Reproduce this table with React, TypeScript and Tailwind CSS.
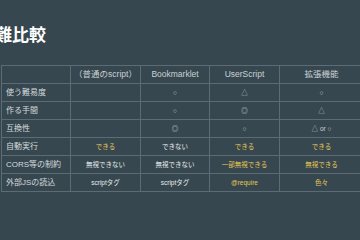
const rows: { label: string; cells: { text: string; yellow?: boolean; sym?: boolean }[] }[] = [
  { label: '使う難易度', cells: [{ text: '' }, { text: '○', sym: true }, { text: '△', sym: true }, { text: '○', sym: true }] },
  { label: '作る手間', cells: [{ text: '' }, { text: '○', sym: true }, { text: '◎', sym: true }, { text: '△', sym: true }] },
  { label: '互換性', cells: [{ text: '' }, { text: '◎', sym: true }, { text: '○', sym: true }, { text: '△ or ○', sym: true }] },
  {
    label: '自動実行',
    cells: [{ text: 'できる', yellow: true }, { text: 'できない' }, { text: 'できる', yellow: true }, { text: 'できる', yellow: true }],
  },
  {
    label: 'CORS等の制約',
    cells: [{ text: '無視できない' }, { text: '無視できない' }, { text: '一部無視できる', yellow: true }, { text: '無視できる', yellow: true }],
  },
  {
    label: '外部JSの読込',
    cells: [{ text: 'scriptタグ' }, { text: 'scriptタグ' }, { text: '@require', yellow: true }, { text: '色々', yellow: true }],
  },
];

const headers = ['', '（普通のscript）', 'Bookmarklet', 'UserScript', '拡張機能'];

export default function App() {
  return (
    <div className="w-[360px] h-[240px] overflow-hidden bg-[#37474f] font-['Liberation_Sans','Noto_Sans_CJK_JP',sans-serif] text-[#d5dbde]">
      {/* Title (cut off at the slide's left edge) */}
      <div className="pt-[25px] h-[65px]">
        <h1 className="ml-[-5px] text-[17px] leading-[22px] font-bold text-white whitespace-nowrap">難比較</h1>
      </div>

      {/* Comparison table */}
      <table className="ml-px w-[362px] table-fixed border-collapse">
        <colgroup>
          <col className="w-[69px]" />
          <col className="w-[70px]" />
          <col className="w-[69px]" />
          <col className="w-[70px]" />
          <col className="w-[84px]" />
        </colgroup>
        <thead>
          <tr className="h-[18px]">
            {headers.map((h, i) => (
              <th key={i} className="border border-[#5d6c74] p-0 text-[8.5px] font-normal text-[#c9d1d5] text-center whitespace-nowrap">
                {h}
              </th>
            ))}
          </tr>
        </thead>
        <tbody>
          {rows.map((row) => (
            <tr key={row.label} className="h-[18px]">
              <td className="border border-[#5d6c74] p-0 pl-[4px] text-[8px] text-[#d5dbde] whitespace-nowrap">{row.label}</td>
              {row.cells.map((c, i) => (
                <td
                  key={i}
                  className={
                    'border border-[#5d6c74] p-0 text-center whitespace-nowrap ' +
                    (c.sym ? 'text-[6.5px] text-[#c9d1d5] ' : 'text-[6.5px] ') +
                    (c.yellow ? 'text-[#e6c75a]' : c.sym ? '' : 'text-[#e8ecee]')
                  }
                >
                  {c.text}
                </td>
              ))}
            </tr>
          ))}
        </tbody>
      </table>
    </div>
  );
}
